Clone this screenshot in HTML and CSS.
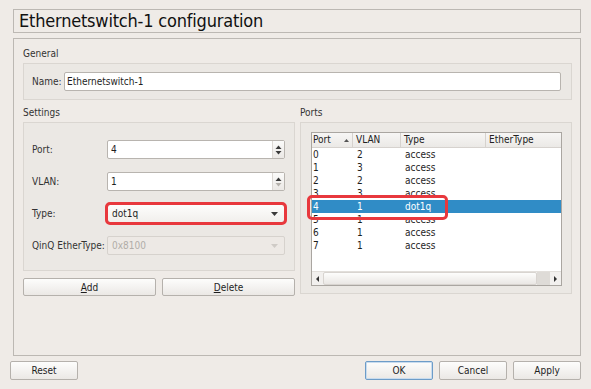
FILE: index.html
```html
<!DOCTYPE html>
<html lang="en">
<head>
    <meta charset="UTF-8">
    <title>Ethernetswitch-1 configuration</title>
    <link rel="stylesheet" href="styles.css">
</head>
<body>
    <div class="title-box">Ethernetswitch-1 configuration</div>

    <div class="main-frame">
        <div class="section-label first">General</div>
        <div class="group general">
            <span class="name-label">Name:</span>
            <div class="text-input name-input">Ethernetswitch-1</div>
        </div>

        <div class="columns">
            <div class="col">
                <div class="section-label">Settings</div>
                <div class="group settings">
                    <div class="form-row">
                        <span class="field-label">Port:</span>
                        <div class="spin">
                            <span class="spin-value">4</span>
                            <div class="spin-buttons">
                                <svg width="7" height="4" viewBox="0 0 7 4"><polygon points="0.5,4 3.5,0.5 6.5,4" fill="#3a3a3a"/></svg>
                                <svg width="7" height="4" viewBox="0 0 7 4"><polygon points="0.5,0 6.5,0 3.5,3.5" fill="#3a3a3a"/></svg>
                            </div>
                        </div>
                    </div>
                    <div class="form-row">
                        <span class="field-label">VLAN:</span>
                        <div class="spin">
                            <span class="spin-value">1</span>
                            <div class="spin-buttons">
                                <svg width="7" height="4" viewBox="0 0 7 4"><polygon points="0.5,4 3.5,0.5 6.5,4" fill="#3a3a3a"/></svg>
                                <svg width="7" height="4" viewBox="0 0 7 4"><polygon points="0.5,0 6.5,0 3.5,3.5" fill="#b5b1ac"/></svg>
                            </div>
                        </div>
                    </div>
                    <div class="form-row">
                        <span class="field-label">Type:</span>
                        <div class="combo marked">
                            <span>dot1q</span>
                            <svg width="7" height="4" viewBox="0 0 7 4"><polygon points="0,0 7,0 3.5,4" fill="#3a3a3a"/></svg>
                        </div>
                    </div>
                    <div class="form-row">
                        <span class="field-label">QinQ EtherType:</span>
                        <div class="combo disabled">
                            <span>0x8100</span>
                            <svg width="7" height="4" viewBox="0 0 7 4"><polygon points="0,0 7,0 3.5,4" fill="#cfcbc6"/></svg>
                        </div>
                    </div>
                </div>
                <div class="button-row">
                    <button class="btn wide"><u>A</u>dd</button>
                    <button class="btn wide"><u>D</u>elete</button>
                </div>
            </div>

            <div class="col">
                <div class="section-label">Ports</div>
                <div class="group ports">
                    <div class="table">
                        <div class="table-head">
                            <div class="head-cell first">Port
                                <svg width="5" height="3" viewBox="0 0 5 3"><polygon points="0,3 2.5,0 5,3" fill="#555"/></svg>
                            </div>
                            <div class="head-cell">VLAN</div>
                            <div class="head-cell">Type</div>
                            <div class="head-cell last">EtherType</div>
                        </div>
                        <div class="table-body" id="portRows"></div>
                        <div class="hscroll">
                            <div class="scroll-btn">
                                <svg width="3" height="6" viewBox="0 0 3 6"><polygon points="3,0 3,6 0,3" fill="#333"/></svg>
                            </div>
                            <div class="scroll-handle"></div>
                            <div class="scroll-rest"></div>
                            <div class="scroll-btn">
                                <svg width="3" height="6" viewBox="0 0 3 6"><polygon points="0,0 3,3 0,6" fill="#333"/></svg>
                            </div>
                        </div>
                        <div class="row-mark"></div>
                    </div>
                </div>
            </div>
        </div>
    </div>

    <div class="bottom-bar">
        <button class="btn">Reset</button>
        <div class="dialog-buttons">
            <button class="btn default">OK</button>
            <button class="btn">Cancel</button>
            <button class="btn">Apply</button>
        </div>
    </div>

<script>
    const ports = [
        { port: 0, vlan: 2, type: 'access' },
        { port: 1, vlan: 3, type: 'access' },
        { port: 2, vlan: 2, type: 'access' },
        { port: 3, vlan: 3, type: 'access' },
        { port: 4, vlan: 1, type: 'dot1q' },
        { port: 5, vlan: 1, type: 'access' },
        { port: 6, vlan: 1, type: 'access' },
        { port: 7, vlan: 1, type: 'access' }
    ];

    const body = document.getElementById('portRows');
    ports.forEach((p) => {
        const row = document.createElement('div');
        row.className = 'table-row' + (p.port === 4 ? ' selected' : '');
        row.innerHTML = `
            <span class="cell first">${p.port}</span>
            <span class="cell">${p.vlan}</span>
            <span class="cell">${p.type}</span>
            <span class="cell"></span>
        `;
        body.appendChild(row);
    });
</script>
</body>
</html>
```

FILE: styles.css
```css
body {
    margin: 0;
    background: #efebe7;
    font-family: "DejaVu Sans Condensed", "Liberation Sans", sans-serif;
    font-size: 10px;
    color: #1e1e1e;
}

.title-box {
    margin: 9px 10px 0 13px;
    height: 22px;
    line-height: 22px;
    border: 1px solid #bcb8b3;
    padding-left: 5px;
    font-size: 18px;
    letter-spacing: -0.2px;
    color: #111;
}

.main-frame {
    margin: 5px 10px 0 13px;
    height: 318px;
    box-sizing: border-box;
    border: 1px solid #bcb8b3;
    padding: 0 8px 0 9px;
}

.section-label {
    height: 14px;
    line-height: 14px;
    margin: 6px 0 2px 0;
    color: #333;
}

.section-label.first {
    margin-top: 8px;
}

.group {
    border: 1px solid #dad6d1;
    background: #ebe8e4;
    box-sizing: border-box;
}

.general {
    display: flex;
    align-items: center;
    padding: 8px 10px 8px 8px;
}

.name-label {
    width: 32px;
    color: #333;
}

.text-input {
    flex: 1;
    height: 19px;
    line-height: 17px;
    box-sizing: border-box;
    border: 1px solid #b8b4af;
    border-radius: 2px;
    background: #fff;
    padding-left: 2px;
}

.columns {
    display: flex;
    gap: 5px;
}

.col {
    width: 272px;
}

.settings {
    height: 149px;
    padding: 17px 9px 15px 8px;
    display: flex;
    flex-direction: column;
    gap: 13px;
}

.form-row {
    display: flex;
    align-items: center;
    height: 19px;
}

.field-label {
    width: 75px;
    color: #333;
}

.spin,
.combo {
    flex: 1;
    height: 19px;
    box-sizing: border-box;
    border: 1px solid #b8b4af;
    border-radius: 2px;
    display: flex;
    align-items: center;
}

.spin {
    background: #fff;
}

.spin-value {
    flex: 1;
    padding-left: 3px;
}

.spin-buttons {
    width: 11px;
    height: 100%;
    border-left: 1px solid #dcd8d4;
    background: linear-gradient(#fbfbfa, #ebe8e5);
    display: flex;
    flex-direction: column;
    align-items: center;
    justify-content: center;
    gap: 2px;
}

.combo {
    justify-content: space-between;
    padding: 0 6px 0 4px;
    background: linear-gradient(#fdfdfc, #f1efec);
}

.combo.marked {
    outline: 3px solid #e8383d;
    outline-offset: -1px;
    border-radius: 3px;
}

.combo.disabled {
    background: #ede9e5;
    border-color: #d6d2cd;
    color: #b1ada8;
}

.button-row {
    display: flex;
    gap: 6px;
    margin-top: 7px;
}

.btn {
    width: 68px;
    height: 19px;
    padding: 0;
    font-family: inherit;
    font-size: 10px;
    color: #1e1e1e;
    border: 1px solid #b5b1ac;
    border-radius: 2px;
    background: linear-gradient(#fdfdfc, #ebe8e5);
}

.btn.wide {
    flex: 1;
    height: 18px;
}

.btn.default {
    border-color: #6d9cc8;
    box-shadow: inset 0 0 0 1px #c9dcee;
}

.ports {
    height: 172px;
    padding: 9px 9px 7px 10px;
}

.table {
    position: relative;
    height: 154px;
    box-sizing: border-box;
    border: 1px solid #aaa6a1;
    background: #fff;
    display: flex;
    flex-direction: column;
}

.table-head,
.table-row {
    display: grid;
    grid-template-columns: 41px 48px 85px 1fr;
}

.table-head {
    height: 15px;
    box-sizing: border-box;
    border-bottom: 1px solid #d6d2ce;
    background: linear-gradient(#f7f6f5, #ebe9e6);
}

.head-cell {
    line-height: 14px;
    padding-left: 3px;
    border-right: 1px solid #d6d2ce;
    color: #222;
}

.head-cell.first {
    padding-left: 1px;
    padding-right: 3px;
    display: flex;
    align-items: center;
    justify-content: space-between;
}

.head-cell.last {
    border-right: none;
}

.table-body {
    flex: 1;
}

.table-row {
    height: 13px;
    line-height: 13px;
}

.cell {
    padding-left: 4px;
}

.cell.first {
    padding-left: 1px;
}

.table-row.selected {
    background: #308cc6;
    color: #fff;
}

.hscroll {
    height: 13px;
    display: flex;
    border-top: 1px solid #e2dfdb;
    background: #f2f0ee;
}

.scroll-btn {
    width: 11px;
    display: flex;
    align-items: center;
    justify-content: center;
}

.scroll-handle {
    flex: 1;
    box-sizing: border-box;
    border: 1px solid #d8d4d0;
    border-radius: 2px;
    background: linear-gradient(#fdfdfc, #eae7e4);
}

.scroll-rest {
    width: 13px;
    background: #dedbd7;
}

.row-mark {
    position: absolute;
    left: -5px;
    top: 62px;
    width: 141px;
    height: 25px;
    box-sizing: border-box;
    border: 3px solid #e8383d;
    border-radius: 5px;
}

.bottom-bar {
    margin: 5px 10px 0 10px;
    display: flex;
    justify-content: space-between;
}

.dialog-buttons {
    display: flex;
    gap: 6px;
}
```
